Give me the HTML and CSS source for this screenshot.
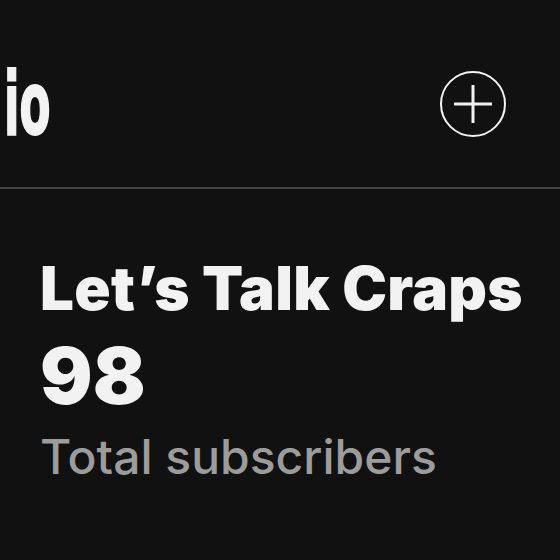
FILE: index.html
```html
<!DOCTYPE html>
<html>
<head>
<meta charset="UTF-8">
<meta name="viewport" content="width=device-width, initial-scale=1.0">
<title>Studio</title>
<link rel="stylesheet" href="styles.css">
</head>
<body>
	<!-- Top bar -->
	<div class="top-bar">
		<span class="brand">io</span>
		<button class="add-button" aria-label="Add">
			<svg width="68" height="68" viewBox="0 0 68 68">
				<circle cx="34" cy="34" r="32" fill="none" stroke="#f2f2f2" stroke-width="2"/>
				<path d="M15 34 H53 M34 15 V53" stroke="#f2f2f2" stroke-width="3"/>
			</svg>
		</button>
	</div>

	<!-- Channel stats -->
	<div class="stats">
		<h1 class="channel-name">Let’s Talk Craps</h1>
		<div class="count">98</div>
		<div class="label">Total subscribers</div>
	</div>
</body>
</html>
```

FILE: styles.css
```css
body {
	font-family: Inter, "Noto Sans", sans-serif;
	margin: 0;
	padding: 0;
	background-color: #111111;
	color: #f2f2f2;
	overflow: hidden;
}

/* Top bar */
.top-bar {
	display: flex;
	justify-content: space-between;
	align-items: center;
	height: 167px;
	padding: 20px 53px 0 4px;
	border-bottom: 2px solid #444444;
}

.brand {
	display: inline-block;
	font-family: "DejaVu Sans Condensed", "DejaVu Sans", sans-serif;
	font-weight: bold;
	font-size: 88px;
	line-height: 1;
	transform: scaleX(0.57);
	transform-origin: left center;
	-webkit-text-stroke: 2px #f2f2f2;
}

.add-button {
	background: none;
	border: none;
	padding: 0;
	width: 68px;
	height: 68px;
	cursor: pointer;
}

.add-button svg {
	display: block;
}

/* Stats */
.stats {
	padding: 0 0 0 40px;
	white-space: nowrap;
}

.channel-name {
	margin: 69px 0 0;
	font-size: 60px;
	font-weight: 900;
	line-height: 1;
	letter-spacing: 0.3px;
}

.count {
	font-size: 78px;
	font-weight: 900;
	line-height: 1;
	margin-top: 19px;
}

.label {
	font-size: 48px;
	font-weight: 500;
	line-height: 1;
	color: #9c9c9c;
	margin-top: 18px;
}
```
